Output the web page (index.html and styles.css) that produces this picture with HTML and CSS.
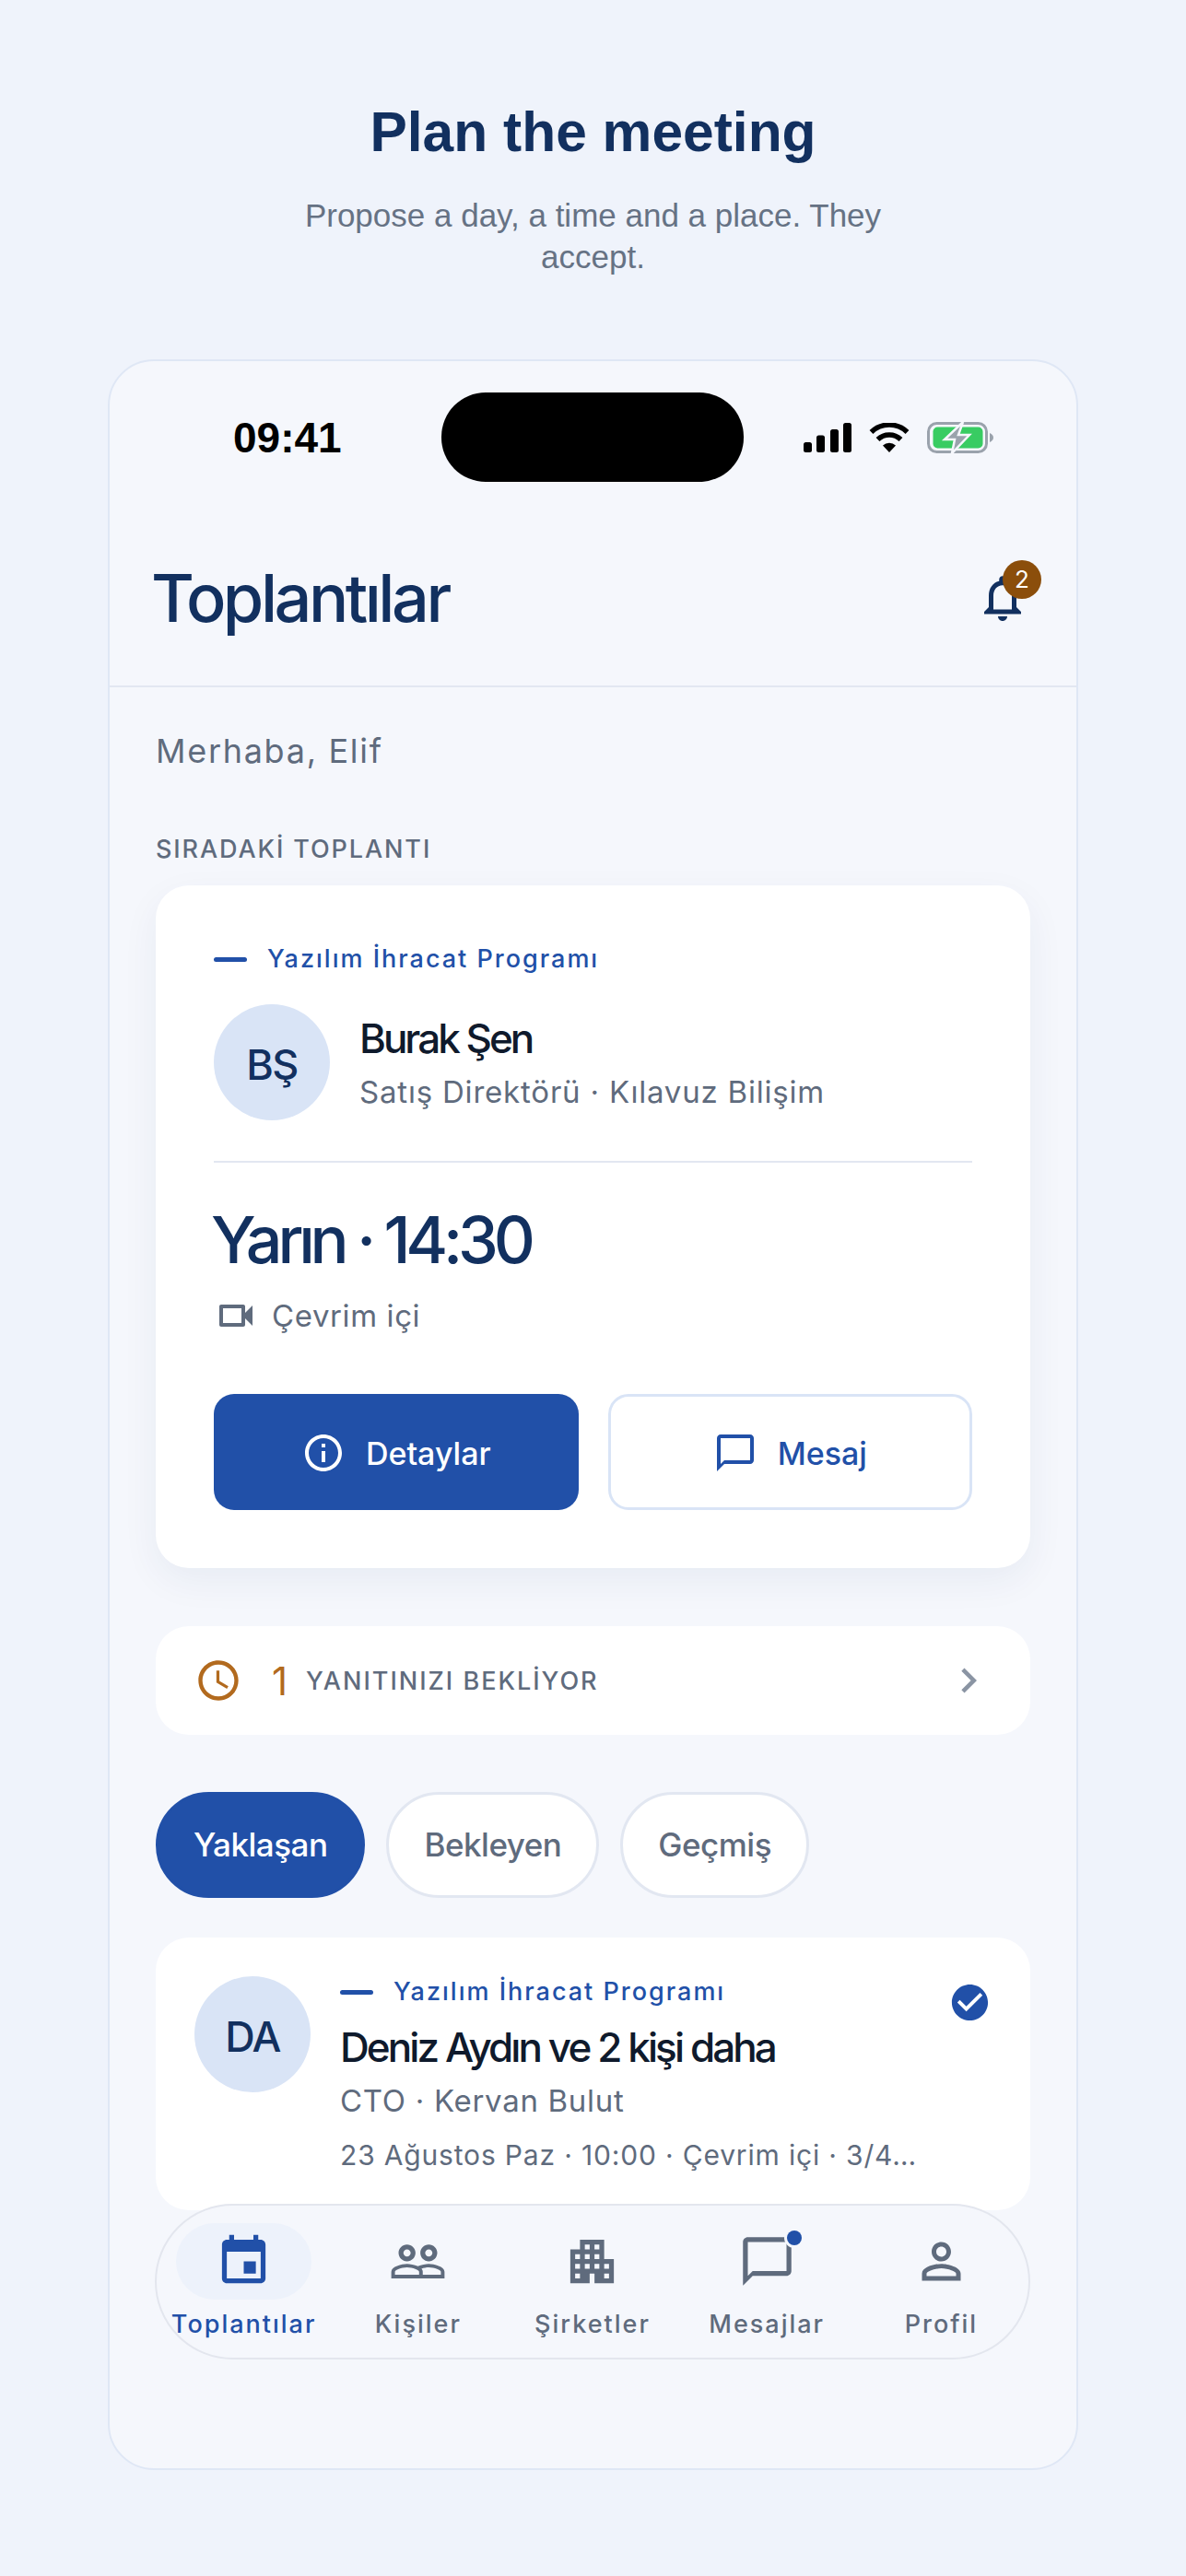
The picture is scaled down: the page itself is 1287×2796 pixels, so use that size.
FILE: index.html
```html
<!DOCTYPE html>
<html lang="tr">
<head>
    <meta charset="UTF-8">
    <meta name="viewport" content="width=device-width, initial-scale=1.0">
    <title>Plan the meeting</title>
    <link rel="stylesheet" href="styles.css">
</head>
<body>
    <header class="intro">
        <h1>Plan the meeting</h1>
        <p>Propose a day, a time and a place. They accept.</p>
    </header>

    <div class="phone">
        <div class="status-bar">
            <span class="clock">09:41</span>
            <span class="island"></span>
            <div class="status-icons">
                <svg width="52" height="32" viewBox="0 0 52 32" fill="#000">
                    <rect x="0" y="21" width="9" height="11" rx="2.5"/>
                    <rect x="14" y="13.500" width="9" height="18.500" rx="2.500"/>
                    <rect x="29" y="7" width="9" height="25" rx="2.500"/>
                    <rect x="43" y="0" width="9" height="32" rx="2.500"/>
                </svg>
                <svg width="44" height="32" viewBox="0 0 44 32" fill="none" stroke="#000" stroke-width="5.500">
                    <path d="M2.500 10 A28 28 0 0 1 41.500 10"/>
                    <path d="M9.500 18 A18 18 0 0 1 34.500 18"/>
                    <path d="M15 24.500 A10 10 0 0 1 29 24.500 L22 32 Z" fill="#000" stroke="none"/>
                </svg>
                <svg width="72" height="34" viewBox="0 0 72 34">
                    <rect x="1.500" y="1.500" width="63" height="31" rx="9" fill="none" stroke="#9aa2ac" stroke-width="3"/>
                    <rect x="6.500" y="5.500" width="54" height="23" rx="5" fill="#38cc62"/>
                    <path d="M68 12 Q72 14 72 17 Q72 20 68 22 Z" fill="#9aa2ac"/>
                    <path d="M39 0 L19 19 H30 L27 34 L46 14 H34 Z" fill="#9aa2ac" stroke="#f5f7fc" stroke-width="2.500"/>
                </svg>
            </div>
        </div>

        <div class="app-bar">
            <h2>Toplantılar</h2>
            <div class="bell">
                <svg class="icon" width="60" height="60" viewBox="0 0 24 24"><path d="M12 22c1.100 0 2-.9 2-2h-4c0 1.100.9 2 2 2zm6-6v-5c0-3.070-1.630-5.640-4.500-6.320V4c0-.83-.67-1.500-1.500-1.500s-1.500.67-1.500 1.500v.68C7.640 5.360 6 7.920 6 11v5l-2 2v1h16v-1l-2-2zm-2 1H8v-6c0-2.480 1.510-4.500 4-4.500s4 2.020 4 4.500v6z"/></svg>
                <span class="bell-badge">2</span>
            </div>
        </div>

        <main class="content">
            <p class="greeting">Merhaba, Elif</p>
            <p class="section-label">SIRADAKİ TOPLANTI</p>

            <section class="next-card">
                <div class="program"><span class="program-dash"></span>Yazılım İhracat Programı</div>
                <div class="person">
                    <div class="avatar">BŞ</div>
                    <div>
                        <div class="person-name">Burak Şen</div>
                        <div class="person-role">Satış Direktörü · Kılavuz Bilişim</div>
                    </div>
                </div>
                <div class="next-divider"></div>
                <div class="next-time">Yarın · 14:30</div>
                <div class="next-place">
                    <svg class="icon" width="48" height="48" viewBox="0 0 24 24"><path d="M17 10.500V7c0-.55-.45-1-1-1H4c-.55 0-1 .45-1 1v10c0 .55.45 1 1 1h12c.55 0 1-.45 1-1v-3.500l4 4v-11l-4 4zM15 16H5V8h10v8z"/></svg>
                    Çevrim içi
                </div>
                <div class="next-actions">
                    <button class="btn btn-primary">
                        <svg class="icon" width="48" height="48" viewBox="0 0 24 24"><path d="M11 7h2v2h-2zm0 4h2v6h-2zm1-9C6.480 2 2 6.480 2 12s4.480 10 10 10 10-4.480 10-10S17.520 2 12 2zm0 18c-4.410 0-8-3.590-8-8s3.590-8 8-8 8 3.590 8 8-3.590 8-8 8z"/></svg>
                        Detaylar
                    </button>
                    <button class="btn btn-outline">
                        <svg class="icon" width="48" height="48" viewBox="0 0 24 24"><path d="M20 2H4c-1.100 0-2 .9-2 2v18l4-4h14c1.100 0 2-.9 2-2V4c0-1.100-.9-2-2-2zm0 14H6l-2 2V4h16v12z"/></svg>
                        Mesaj
                    </button>
                </div>
            </section>

            <section class="pending">
                <svg class="icon" width="52" height="52" viewBox="0 0 24 24"><path d="M11.990 2C6.470 2 2 6.480 2 12s4.470 10 9.990 10C17.520 22 22 17.520 22 12S17.520 2 11.990 2zM12 20c-4.420 0-8-3.580-8-8s3.580-8 8-8 8 3.580 8 8-3.580 8-8 8zm.5-13H11v6l5.250 3.150.75-1.230-4.500-2.670z"/></svg>
                <span class="pending-count">1</span>
                <span class="pending-label">YANITINIZI BEKLİYOR</span>
                <svg class="icon pending-arrow" width="54" height="54" viewBox="0 0 24 24"><path d="M10 6L8.590 7.410 13.170 12l-4.580 4.590L10 18l6-6z"/></svg>
            </section>

            <div class="chips">
                <span class="chip chip-active">Yaklaşan</span>
                <span class="chip">Bekleyen</span>
                <span class="chip">Geçmiş</span>
            </div>

            <section class="meeting">
                <div class="avatar">DA</div>
                <div class="meeting-body">
                    <div class="program"><span class="program-dash"></span>Yazılım İhracat Programı</div>
                    <div class="meeting-name">Deniz Aydın ve 2 kişi daha</div>
                    <div class="meeting-role">CTO · Kervan Bulut</div>
                    <div class="meeting-meta">23 Ağustos Paz · 10:00 · Çevrim içi · 3/4…</div>
                </div>
                <svg class="icon meeting-check" width="47" height="47" viewBox="0 0 24 24"><path d="M12 2C6.480 2 2 6.480 2 12s4.480 10 10 10 10-4.480 10-10S17.520 2 12 2zm-2 15l-5-5 1.410-1.410L10 14.170l7.590-7.590L19 8l-9 9z"/></svg>
            </section>
        </main>

        <!-- bottom tabs float over the list -->
        <nav class="tabs">
            <a class="tab tab-active">
                <span class="tab-icon"><svg class="icon" width="63" height="63" viewBox="0 0 24 24"><path d="M17 12h-5v5h5v-5zM16 1v2H8V1H6v2H5c-1.110 0-1.990.9-1.990 2L3 19c0 1.100.89 2 2 2h14c1.100 0 2-.9 2-2V5c0-1.100-.9-2-2-2h-1V1h-2zm3 18H5V8h14v11z"/></svg></span>
                Toplantılar
            </a>
            <a class="tab">
                <span class="tab-icon"><svg class="icon" width="63" height="63" viewBox="0 0 24 24"><path d="M16.500 13c-1.200 0-3.070.34-4.500 1-1.430-.67-3.300-1-4.500-1C5.330 13 1 14.080 1 16.250V19h22v-2.750c0-2.170-4.330-3.250-6.500-3.250zm-4 4.500h-10v-1.250c0-.54 2.560-1.750 5-1.750s5 1.210 5 1.750v1.250zm9 0H14v-1.250c0-.46-.2-.86-.52-1.220.88-.3 1.960-.53 3.020-.53 2.440 0 5 1.210 5 1.750v1.250zM7.500 12c1.930 0 3.500-1.570 3.500-3.500S9.430 5 7.500 5 4 6.570 4 8.500 5.570 12 7.500 12zm0-5c.83 0 1.500.67 1.500 1.500S8.330 10 7.500 10 6 9.330 6 8.500 6.670 7 7.500 7zm9 5c1.930 0 3.500-1.570 3.500-3.500S18.430 5 16.500 5 13 6.570 13 8.500s1.570 3.500 3.500 3.500zm0-5c.83 0 1.500.67 1.500 1.500s-.67 1.500-1.500 1.500S15 9.330 15 8.500 15.670 7 16.500 7z"/></svg></span>
                Kişiler
            </a>
            <a class="tab">
                <span class="tab-icon"><svg class="icon" width="63" height="63" viewBox="0 0 24 24"><path d="M17 11V3H7v4H3v14h8v-4h2v4h8V11h-4zM7 19H5v-2h2v2zm0-4H5v-2h2v2zm0-4H5V9h2v2zm4 4H9v-2h2v2zm0-4H9V9h2v2zm0-4H9V5h2v2zm4 8h-2v-2h2v2zm0-4h-2V9h2v2zm0-4h-2V5h2v2zm4 12h-2v-2h2v2zm0-4h-2v-2h2v2z"/></svg></span>
                Şirketler
            </a>
            <a class="tab">
                <span class="tab-icon">
                    <svg class="icon" width="63" height="63" viewBox="0 0 24 24"><path d="M20 2H4c-1.100 0-2 .9-2 2v18l4-4h14c1.100 0 2-.9 2-2V4c0-1.100-.9-2-2-2zm0 14H6l-2 2V4h16v12z"/></svg>
                    <span class="tab-dot"></span>
                </span>
                Mesajlar
            </a>
            <a class="tab">
                <span class="tab-icon"><svg class="icon" width="63" height="63" viewBox="0 0 24 24"><path d="M12 5.900c1.160 0 2.100.94 2.100 2.100s-.94 2.100-2.100 2.100S9.900 9.160 9.900 8s.94-2.100 2.100-2.100m0 9c2.970 0 6.100 1.460 6.100 2.100v1.100H5.900V17c0-.64 3.130-2.100 6.100-2.100M12 4C9.790 4 8 5.790 8 8s1.790 4 4 4 4-1.790 4-4-1.790-4-4-4zm0 9c-2.670 0-8 1.340-8 4v3h16v-3c0-2.660-5.330-4-8-4z"/></svg></span>
                Profil
            </a>
        </nav>
    </div>
</body>
</html>
```

FILE: styles.css
```css
/* Page */
body {
    margin: 0;
    background-color: #eff3fb;
    font-family: Inter, "Noto Sans", sans-serif;
    color: #5f6b7d;
}
.icon {
    display: block;
    flex: none;
    fill: currentColor;
}

/* Heading above the phone */
.intro {
    padding-top: 108px;
    text-align: center;
    font-family: "Liberation Sans", Arial, sans-serif;
}
.intro h1 {
    margin: 0;
    font-size: 60.500px;
    line-height: 70px;
    font-weight: 700;
    color: #12305f;
}
.intro p {
    margin: 33px auto 0;
    width: 660px;
    font-size: 35px;
    line-height: 45px;
    color: #667284;
}

/* Phone frame */
.phone {
    position: relative;
    box-sizing: border-box;
    width: 1053px;
    height: 2291px;
    margin: 89px auto 0;
    border: 2px solid #dfe7f5;
    border-radius: 50px;
    background-color: #f5f7fc;
    overflow: hidden;
}

/* Status bar */
.status-bar {
    display: flex;
    align-items: center;
    padding: 34px 0 0 134px;
}
.clock {
    width: 226px;
    font-family: "Liberation Sans", Arial, sans-serif;
    font-size: 46px;
    font-weight: 700;
    color: #000;
}
.island {
    width: 328px;
    height: 97px;
    border-radius: 48px;
    background-color: #000;
}
.status-icons {
    display: flex;
    align-items: center;
    gap: 19px;
    margin-left: 65px;
}

/* App bar */
.app-bar {
    display: flex;
    align-items: center;
    justify-content: space-between;
    padding: 86px 50px 55px 45px;
    border-bottom: 2px solid #e2e7f1;
}
.app-bar h2 {
    margin: 0;
    font-size: 72px;
    line-height: 80px;
    font-weight: 500;
    letter-spacing: -3.500px;
    color: #12305f;
}
.bell {
    position: relative;
    color: #12305f;
}
.bell-badge {
    position: absolute;
    top: -11px;
    right: -12px;
    width: 42px;
    height: 42px;
    border-radius: 50%;
    background-color: #8b4e0b;
    color: #fff;
    font-size: 26px;
    line-height: 42px;
    text-align: center;
}

.content {
    padding: 0 50px;
}
.greeting {
    margin: 47px 0 0;
    font-size: 36px;
    line-height: 44px;
    letter-spacing: 1.700px;
}
.section-label {
    margin: 68px 0 22px;
    font-size: 27px;
    line-height: 34px;
    font-weight: 500;
    letter-spacing: 1.900px;
}

/* Next meeting card */
.next-card {
    padding: 63px;
    border-radius: 36px;
    background-color: #fff;
    box-shadow: 0 14px 40px rgba(18, 48, 95, 0.06);
}
.program {
    display: flex;
    align-items: center;
    gap: 22px;
    font-size: 27px;
    line-height: 34px;
    font-weight: 500;
    letter-spacing: 2px;
    color: #2150a8;
}
.program-dash {
    width: 36px;
    height: 5px;
    border-radius: 3px;
    background-color: #2150a8;
}
.person {
    display: flex;
    align-items: center;
    gap: 32px;
    margin-top: 32px;
}
.avatar {
    flex: none;
    width: 126px;
    height: 126px;
    border-radius: 50%;
    background-color: #d9e4f6;
    color: #12305f;
    font-size: 45px;
    font-weight: 500;
    letter-spacing: -1.500px;
    line-height: 131px;
    text-align: center;
}
.person-name {
    font-size: 44px;
    line-height: 50px;
    font-weight: 500;
    letter-spacing: -3px;
    color: #0f1a2c;
}
.person-role {
    margin-top: 13px;
    font-size: 33px;
    line-height: 40px;
    letter-spacing: 0.800px;
}
.next-divider {
    height: 2px;
    margin-top: 44px;
    background-color: #e2e7f1;
}
.next-time {
    margin-top: 42px;
    margin-left: -3px;
    font-size: 70px;
    line-height: 84px;
    font-weight: 500;
    letter-spacing: -5.200px;
    color: #12305f;
}
.next-place {
    display: flex;
    align-items: center;
    gap: 15px;
    margin-top: 16px;
    font-size: 33px;
    line-height: 48px;
    letter-spacing: 0.600px;
}
.next-actions {
    display: grid;
    grid-template-columns: 1fr 1fr;
    gap: 32px;
    margin-top: 61px;
}
.btn {
    display: flex;
    align-items: center;
    justify-content: center;
    gap: 22px;
    height: 126px;
    padding: 2px 0 0;
    border-radius: 22px;
    font-family: inherit;
    font-size: 34px;
    font-weight: 500;
}
.btn-primary {
    border: none;
    background-color: #2150a8;
    color: #fff;
}
.btn-outline {
    border: 3px solid #d9e4f6;
    background-color: #fff;
    color: #2150a8;
}

/* Waiting for reply row */
.pending {
    display: flex;
    align-items: center;
    height: 118px;
    margin-top: 63px;
    padding: 0 40px 0 42px;
    border-radius: 36px;
    background-color: #fff;
}
.pending .icon:first-child {
    color: #b26a1e;
}
.pending-count {
    margin-left: 32px;
    font-size: 42px;
    font-weight: 400;
    color: #b26a1e;
}
.pending-label {
    margin-left: 20px;
    font-size: 27px;
    font-weight: 500;
    letter-spacing: 2px;
}
.pending-arrow {
    margin-left: auto;
    color: #8a94a3;
}

/* Filter chips */
.chips {
    display: flex;
    gap: 23px;
    margin-top: 62px;
}
.chip {
    box-sizing: border-box;
    height: 115px;
    padding: 0 38px;
    border: 3px solid #e2e7f1;
    border-radius: 58px;
    background-color: #fff;
    font-size: 35px;
    line-height: 109px;
    font-weight: 500;
    letter-spacing: -0.500px;
}
.chip-active {
    border-color: #2150a8;
    background-color: #2150a8;
    color: #fff;
}

/* Meeting in the list */
.meeting {
    display: flex;
    align-items: flex-start;
    gap: 32px;
    margin-top: 43px;
    padding: 42px 42px 40px;
    border-radius: 36px;
    background-color: #fff;
}
.meeting-body {
    flex: 1;
    min-width: 0;
}
.meeting-name {
    margin-top: 18px;
    font-size: 44px;
    line-height: 50px;
    font-weight: 500;
    letter-spacing: -2.900px;
    color: #0f1a2c;
}
.meeting-role {
    margin-top: 13px;
    font-size: 33px;
    line-height: 40px;
    letter-spacing: 0.700px;
}
.meeting-meta {
    margin-top: 19px;
    font-size: 30px;
    line-height: 40px;
    letter-spacing: 0.830px;
    white-space: nowrap;
}
.meeting-check {
    margin-top: 5px;
    color: #2150a8;
}

/* Bottom tabs */
.tabs {
    position: absolute;
    top: 2000px;
    left: 49px;
    box-sizing: border-box;
    display: grid;
    grid-template-columns: repeat(5, 1fr);
    width: 950px;
    height: 169px;
    padding-top: 19px;
    border: 2px solid #e3e6ee;
    border-radius: 85px;
    background-color: #f5f7fc;
}
.tab {
    display: flex;
    flex-direction: column;
    align-items: center;
    font-size: 27px;
    line-height: 34px;
    font-weight: 500;
    letter-spacing: 2px;
    white-space: nowrap;
}
.tab-icon {
    position: relative;
    display: flex;
    align-items: center;
    justify-content: center;
    width: 147px;
    height: 83px;
    margin-bottom: 10px;
    border-radius: 42px;
}
.tab-active {
    color: #2150a8;
}
.tab-active .tab-icon {
    background-color: #edf2fb;
}
.tab-dot {
    position: absolute;
    top: 8px;
    left: 95px;
    width: 16px;
    height: 16px;
    border-radius: 50%;
    background-color: #2150a8;
    box-shadow: 0 0 0 3px #f5f7fc;
}
```
